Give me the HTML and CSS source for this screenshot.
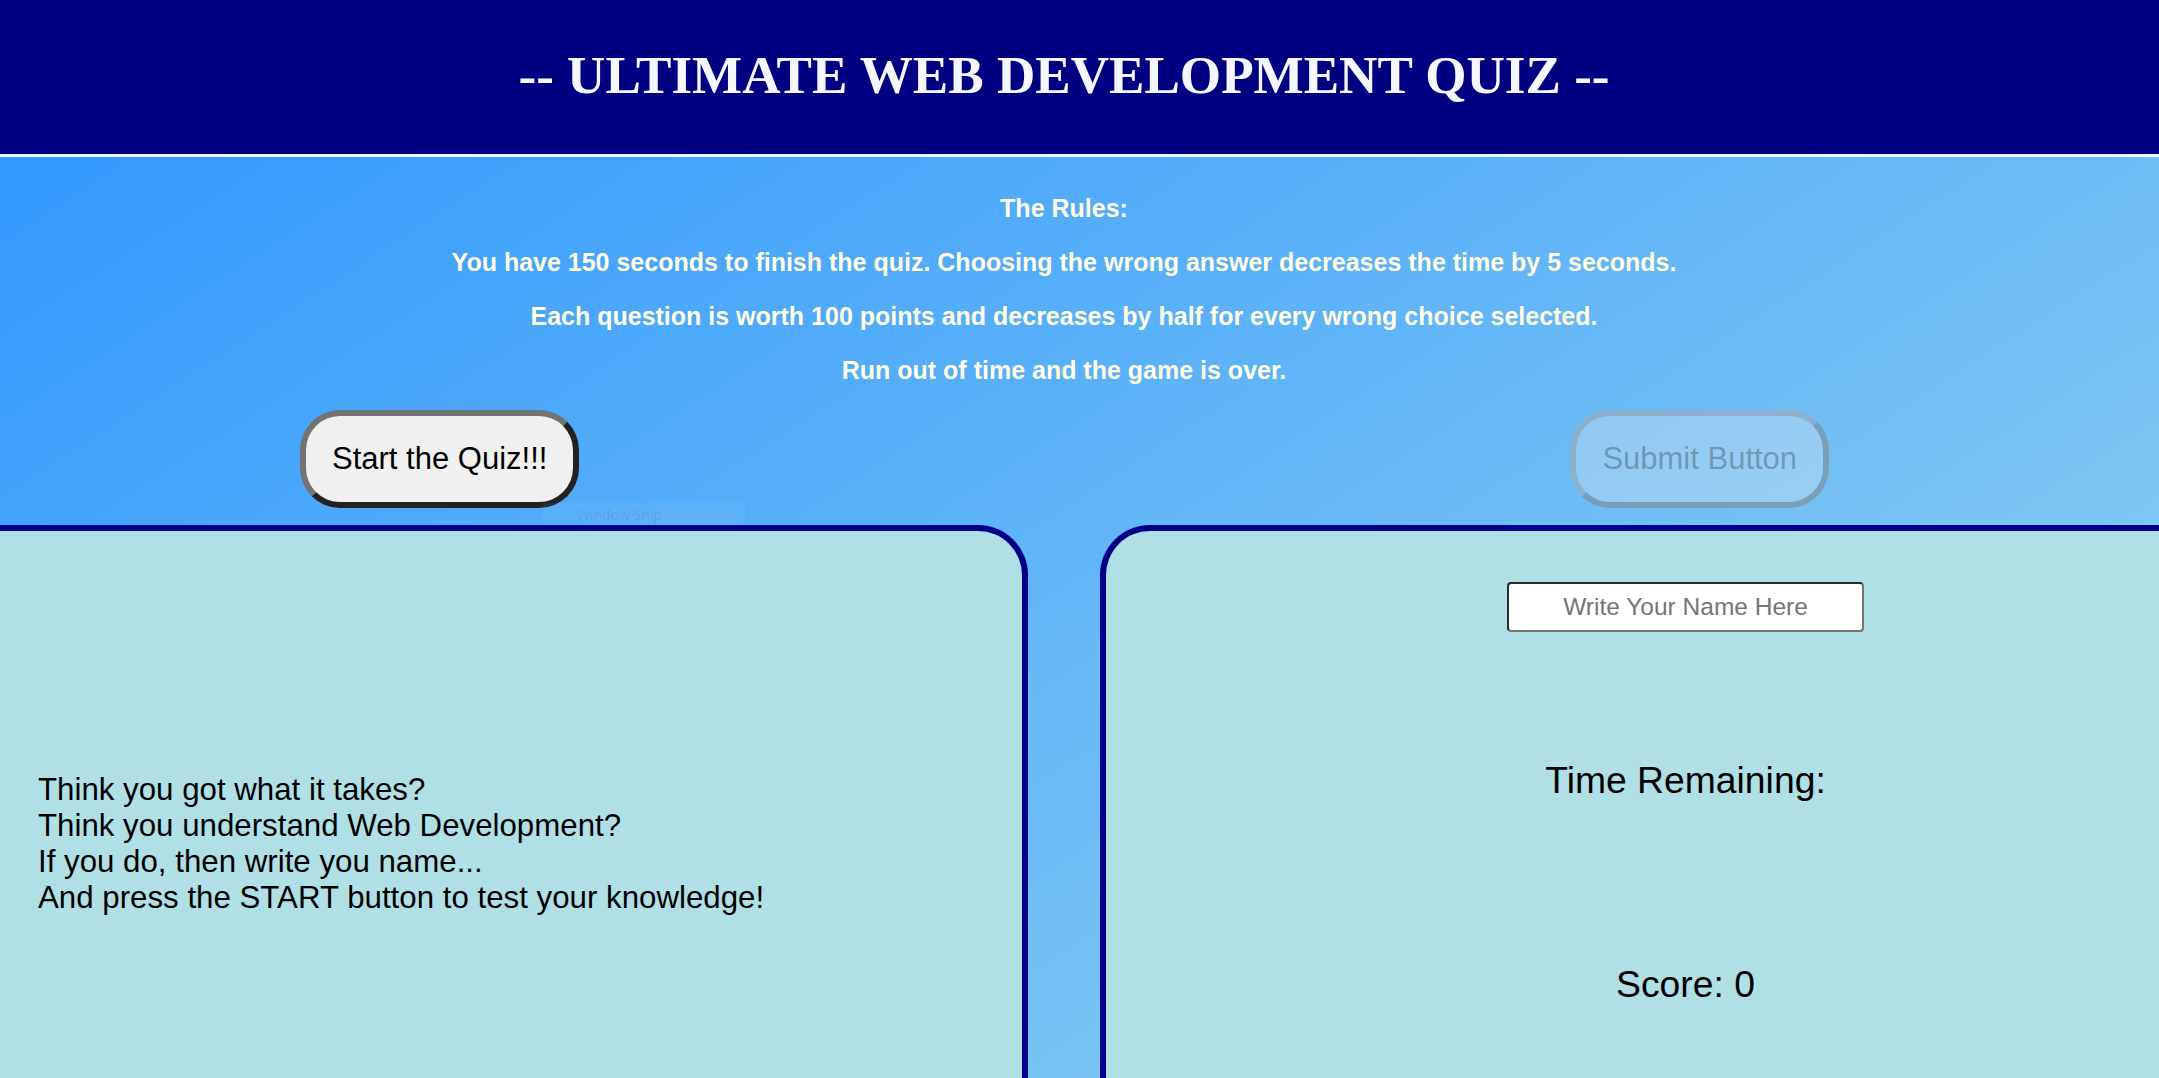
FILE: index.html
```html
<!DOCTYPE html>
<html lang="en">
<head>
<meta charset="utf-8">
<title>Ultimate Web Development Quiz</title>
<link rel="stylesheet" href="styles.css">
</head>
<body>
<header class="site-header">
  <h1 class="title">-- ULTIMATE WEB DEVELOPMENT QUIZ --</h1>
</header>

<section class="rules">
  <p>The Rules:</p>
  <p>You have 150 seconds to finish the quiz. Choosing the wrong answer decreases the time by 5 seconds.</p>
  <p>Each question is worth 100 points and decreases by half for every wrong choice selected.</p>
  <p>Run out of time and the game is over.</p>
</section>

<div class="controls">
  <button class="btn btn-start" type="button">Start the Quiz!!!</button>
  <button class="btn btn-submit" type="button" disabled>Submit Button</button>
  <div class="snip">Window Snip</div>
</div>

<main class="panels">
  <section class="panel panel-left">
    <p class="intro">Think you got what it takes?<br>Think you understand Web Development?<br>If you do, then write you name...<br>And press the START button to test your knowledge!</p>
  </section>
  <section class="panel panel-right">
    <input class="name-input" type="text" placeholder="Write Your Name Here">
    <div class="time">Time Remaining:</div>
    <div class="score">Score: 0</div>
  </section>
</main>
</body>
</html>
```

FILE: styles.css
```css
html, body {
  margin: 0;
  padding: 0;
  overflow: hidden;
}

body {
  height: 1078px;
  font-family: "Liberation Sans", Arial, sans-serif;
  background: linear-gradient(to bottom right, rgb(44, 149, 255), rgb(164, 221, 238));
  background-size: 100% 1400px;
  background-repeat: no-repeat;
  background-color: rgb(130, 200, 240);
}

.site-header {
  background: #000080;
  border-bottom: 3px solid #eaf9ff;
  display: flex;
  align-items: center;
  justify-content: center;
  padding: 0 31px 4px 0;
  box-sizing: border-box;
  height: 157px;
}

.title {
  margin: 0;
  font-family: "Liberation Serif", "Times New Roman", serif;
  font-weight: bold;
  font-size: 53.1px;
  color: #f6f6ff;
  white-space: nowrap;
}

.rules {
  padding: 12px 31px 0 0;
  text-align: center;
  color: #fffde4;
  font-weight: bold;
  font-size: 25px;
}

.rules p {
  margin: 25px 0;
}

.controls {
  position: relative;
  display: flex;
  align-items: flex-start;
  padding-left: 300px;
}

.btn {
  font-family: "Liberation Sans", Arial, sans-serif;
  font-size: 31px;
  padding: 25px 26px;
  border-width: 6px;
  border-style: solid;
  border-radius: 40px;
  line-height: normal;
}

.btn-start {
  background: #f0f0f0;
  color: #000;
  border-color: #737373 #222 #222 #737373;
}

.btn-submit {
  margin-left: 991px;
  background: rgba(239, 239, 239, 0.3);
  color: rgba(16, 16, 16, 0.3);
  border-color: rgba(118, 118, 118, 0.3) rgba(50, 50, 50, 0.3) rgba(50, 50, 50, 0.3) rgba(118, 118, 118, 0.3);
}

.snip {
  position: absolute;
  left: 543px;
  top: 93px;
  width: 202px;
  height: 24px;
  background: rgba(255, 255, 255, 0.05);
  color: rgba(20, 60, 140, 0.12);
  font-family: "Open Sans", sans-serif;
  font-size: 14px;
  line-height: 24px;
  padding-left: 34px;
  box-sizing: border-box;
}

.panels {
  position: relative;
  display: flex;
  gap: 72px;
  margin-top: 17px;
}

.panel {
  background: #b0e0e6;
  border-top: 6px solid #00008b;
  height: 900px;
  box-sizing: border-box;
}

.panel-left {
  width: 1028px;
  border-right: 6px solid #00008b;
  border-top-right-radius: 50px;
  padding: 241px 0 0 38px;
}

.intro {
  margin: 0;
  font-size: 31.25px;
  color: #000;
  line-height: normal;
}

.panel-right {
  flex: 1;
  border-left: 6px solid #00008b;
  border-top-left-radius: 50px;
  padding-left: 106px;
  display: flex;
  flex-direction: column;
  align-items: center;
}

.name-input {
  margin-top: 51px;
  width: 357px;
  height: 50px;
  box-sizing: border-box;
  border: 2px solid;
  border-color: #2a2a2a #767676 #767676 #2a2a2a;
  border-radius: 4px;
  background: #fff;
  font-family: "Liberation Sans", Arial, sans-serif;
  font-size: 24.5px;
  text-align: center;
  padding: 0;
}

.name-input::placeholder {
  color: #757575;
}

.time {
  margin-top: 127px;
  font-size: 37.3px;
  color: #000;
}

.score {
  margin-top: 161px;
  font-size: 37.3px;
  color: #000;
}
```
